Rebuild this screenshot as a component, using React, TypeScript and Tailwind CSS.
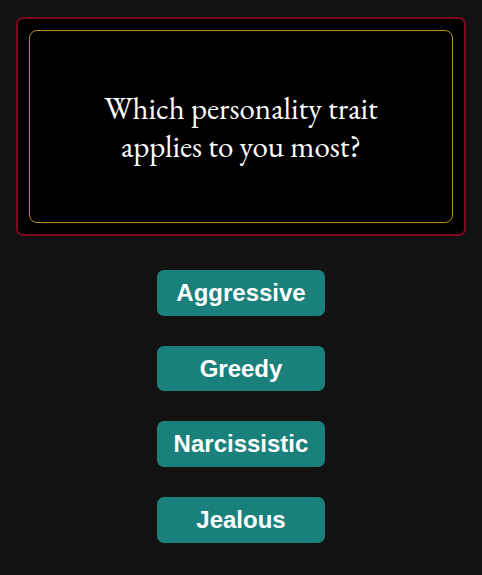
import React from "react";

const options = ["Aggressive", "Greedy", "Narcissistic", "Jealous"];

export default function App() {
  return (
    <div className="min-h-[575px] w-full bg-[#121212] pt-[17px] px-[16px]">
      <div className="w-[450px] h-[219px] rounded-[7px] border-2 border-[#7a0a1c] bg-black p-[11px]">
        <div className="h-full w-full rounded-[8px] border border-[#b8901a] flex items-center justify-center">
          <p
            className="text-center text-white text-[31px] leading-[38px] w-[320px]"
            style={{ fontFamily: '"EB Garamond", "Liberation Serif", serif' }}
          >
            Which personality trait applies to you most?
          </p>
        </div>
      </div>
      <div className="mt-[34px] flex flex-col items-center gap-[30px]">
        {options.map((o) => (
          <button
            key={o}
            className="w-[168px] h-[45.7px] rounded-[7px] bg-[#1a807b] text-white text-[24px] font-bold flex items-center justify-center"
            style={{ fontFamily: '"Liberation Sans", Arial, sans-serif' }}
          >
            {o}
          </button>
        ))}
      </div>
    </div>
  );
}
